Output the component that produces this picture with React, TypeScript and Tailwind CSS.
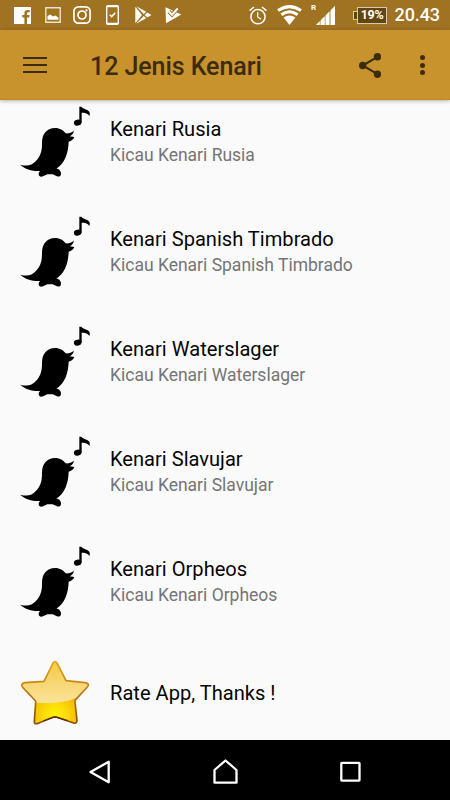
type Track = {
  title: string;
  subtitle: string;
};

const TRACKS: Track[] = [
  { title: 'Kenari Rusia', subtitle: 'Kicau Kenari Rusia' },
  { title: 'Kenari Spanish Timbrado', subtitle: 'Kicau Kenari Spanish Timbrado' },
  { title: 'Kenari Waterslager', subtitle: 'Kicau Kenari Waterslager' },
  { title: 'Kenari Slavujar', subtitle: 'Kicau Kenari Slavujar' },
  { title: 'Kenari Orpheos', subtitle: 'Kicau Kenari Orpheos' },
];

function BirdIcon() {
  return (
    <svg viewBox="30 21 210 210" className="size-[70px] shrink-0 overflow-visible" fill="#000">
      <path d="M31 194C52 200 66 196 77 184C94 166 96 150 96 128C96 101 112 84 135 84C150 84 160 91 167 100C175 101 183 99 192 92C190 101 185 105 179 109L193 111C190 119 184 123 176 125C175 160 164 190 139 206C146 205 153 212 153 221C153 228 147 231 141 229L128 223H112L99 229C92 232 86 229 86 222C86 218 88 215 91 213C67 214 45 208 31 194Z" />
      <ellipse cx="203" cy="68" rx="11.5" ry="9" transform="rotate(-12 203 68)" />
      <path d="M208 20H214C218 27 226 26 233 31C240 36 241 41 238 48C233 39 224 38 215 38V68H208Z" />
    </svg>
  );
}

const STAR_PATH =
  'M129 39Q135 31 141 39L168 92L225 98Q241 101 232 111L197 149Q194 152 195 156L201 212Q200 222 191 219L141 202Q135 200 129 202L81 221Q72 223 73 213L77 157Q77 153 74 150L38 112Q30 101 45 98L102 94Z';

function StarIcon() {
  return (
    <svg viewBox="30 21 210 210" className="size-[70px] shrink-0 overflow-visible">
      <defs>
        <linearGradient id="star-edge" x1="0" y1="0" x2="0" y2="1">
          <stop offset="0" stopColor="#e0a51c" />
          <stop offset="0.5" stopColor="#bd7910" />
          <stop offset="1" stopColor="#8a4a08" />
        </linearGradient>
        <radialGradient id="star-body" cx="0.5" cy="0.8" r="0.4">
          <stop offset="0" stopColor="#fff200" />
          <stop offset="0.4" stopColor="#fcdc08" />
          <stop offset="1" stopColor="#f0ad08" />
        </radialGradient>
        <linearGradient id="star-gloss" x1="0" y1="0" x2="0" y2="1">
          <stop offset="0" stopColor="#f5c83c" />
          <stop offset="0.6" stopColor="#f8d878" />
          <stop offset="1" stopColor="#fae29a" />
        </linearGradient>
        <clipPath id="star-clip">
          <path d={STAR_PATH} />
        </clipPath>
      </defs>
      <g clipPath="url(#star-clip)">
        <rect x="30" y="27" width="210" height="210" fill="url(#star-body)" />
        <path d="M30 27H240V118C205 150 150 164 70 158L30 150Z" fill="url(#star-gloss)" />
      </g>
      <path d={STAR_PATH} fill="none" stroke="url(#star-edge)" strokeWidth="5" strokeLinejoin="round" />
      <path d="M100 213L129 202Q135 200 141 202L172 212" fill="none" stroke="#5a2c05" strokeWidth="4" />
    </svg>
  );
}

function StatusBar() {
  return (
    <div className="flex h-[30px] shrink-0 items-center bg-[#a07322] pr-[10px] pl-[14px] text-white">
      <svg viewBox="0 0 17 17" className="h-[17px] w-[17px]">
        <path fill="#fff" d="M0 0H17V17H13V10.5H15.2L15.6 8H13V6.5Q13 5.3 14.2 5.3H15.7V3H13.5Q10.4 3 10.4 6V8H8.3V10.5H10.4V17H0Z" />
      </svg>
      <svg viewBox="0 0 16 16" className="ml-[14px] h-4 w-4">
        <path fill="none" stroke="#fff" strokeOpacity="0.8" strokeWidth="1.4" d="M.8 .8H15.2V15.2H.8Z" />
        <path fill="#fff" d="M2.5 12.8V9L5.3 7.5L8 9.6L10.5 8.6L13.5 10.7V12.8Z" />
      </svg>
      <svg viewBox="0 0 18 18" className="ml-3 h-[18px] w-[18px]" fill="none" stroke="#fff" strokeWidth="1.7">
        <rect x=".9" y=".9" width="16.2" height="16.2" rx="4.5" />
        <circle cx="9" cy="9" r="4" />
        <circle cx="13.5" cy="4.4" r="1.1" fill="#fff" stroke="none" />
      </svg>
      <svg viewBox="0 0 13 20" className="ml-[15px] h-5 w-[13px]" fill="none" stroke="#fff">
        <rect x=".7" y=".7" width="11.6" height="18.6" rx="1.2" strokeWidth="1.4" />
        <path d="M1 1.500H12M1 18.500H12" strokeWidth="1.6" />
        <path d="M3.7 9.8L5.6 11.6L9.300 7.800" strokeWidth="1.5" />
      </svg>
      <svg viewBox="0 0 17 18" className="ml-4 h-[18px] w-[17px]" fill="#fff">
        <path d="M.3 .8L7 9L.3 17.2Z" />
        <path d="M1.2 .3L11.2 5.8L8.8 8.1ZM1.2 17.7L11.2 12.2L8.8 9.9ZM12.2 6.4L16.5 9L12.2 11.6L9.7 9Z" />
      </svg>
      <svg viewBox="0 0 17 18" className="ml-[13px] h-[18px] w-[17px]">
        <path fill="#fff" d="M.5 1.200L16.300 8.500L1 17.200Z" />
        <path fill="none" stroke="#a07322" strokeWidth="4" d="M3.800 5.500L7 8.700L13.700 1.500" />
        <path fill="none" stroke="#fff" strokeWidth="2" d="M3.800 5.500L7 8.700L12.700 2.500" />
      </svg>

      <svg viewBox="0 0 18 19" className="ml-auto h-[19px] w-[18px]" fill="none" stroke="#fff">
        <circle cx="9" cy="10.7" r="7.1" strokeWidth="1.5" />
        <path d="M.6 4.7L5 1M17.4 4.7L13 1" strokeWidth="1.6" />
        <path d="M8.7 6.2V11L12 13.2" strokeWidth="1.3" />
      </svg>
      <svg viewBox="0 0 25 20" className="ml-[10px] h-5 w-[25px]" fill="none" stroke="#fff" strokeWidth="3">
        <path d="M1 5.6Q12.5 -2.4 24 5.6" />
        <path d="M4.4 9.7Q12.5 3.8 20.6 9.7" />
        <path fill="#fff" stroke="none" d="M6.6 12.6Q12.5 8.3 18.4 12.6L12.5 20Z" />
      </svg>
      <span className="ml-[9px] h-[22px] w-[5px] text-[8px] leading-[7px] font-bold">R</span>
      <svg viewBox="0 0 19 19" className="h-[19px] w-[19px]">
        <path fill="#fff" fillOpacity="0.55" d="M19 0V19H0Z" />
        <path fill="#fff" d="M0 19L3.5 15.5V19ZM5 14L8.5 10.5V19H5ZM10 9L13 6V19H10ZM15 4L19 0V19H15Z" />
      </svg>
      <div className="ml-[18px] flex h-[17px] items-center">
        <div className="h-[9px] w-[4px] border border-r-0 border-[#d8c9ab] bg-[#63450f]" />
        <div className="flex h-[17px] w-[30px] items-center justify-center border border-[#d8c9ab] bg-[#63450f] text-[12.5px] leading-none font-bold tracking-[-0.3px]">
          19%
        </div>
      </div>
      <span className="ml-[7px] w-[46px] text-right text-[18px] leading-none font-medium tracking-[-0.1px] whitespace-nowrap">
        20.43
      </span>
    </div>
  );
}

function AppBar() {
  return (
    <header className="z-10 flex h-[70px] shrink-0 items-center border-b border-[#c28a1c] bg-[#c8922c] pt-px pr-[25px] pl-[23px] text-[#3c2c0d] shadow-[0_1px_4px_rgba(0,0,0,0.3)]">
      <button type="button" aria-label="Menu" className="-mt-px flex w-6 flex-col gap-[5px]">
        <span className="h-[2px] bg-current" />
        <span className="h-[2px] bg-current" />
        <span className="h-[2px] bg-current" />
      </button>
      <h1 className="ml-[43px] pt-[2px] text-[25px] leading-none font-medium tracking-[-0.07px]">12 Jenis Kenari</h1>
      <button type="button" aria-label="Share" className="ml-auto">
        <svg viewBox="0 0 22.4 25" className="h-[25px] w-[22.4px]" fill="currentColor">
          <path d="M18.5 3.8L3.7 12.5L18.5 21.2" fill="none" stroke="currentColor" strokeWidth="2.1" />
          <circle cx="18.5" cy="3.8" r="3.7" />
          <circle cx="3.7" cy="12.5" r="3.7" />
          <circle cx="18.5" cy="21.2" r="3.7" />
        </svg>
      </button>
      <button type="button" aria-label="More options" className="ml-[39px] flex flex-col gap-[2.5px]">
        <span className="size-[5px] rounded-full bg-current" />
        <span className="size-[5px] rounded-full bg-current" />
        <span className="size-[5px] rounded-full bg-current" />
      </button>
    </header>
  );
}

function NavigationBar() {
  return (
    <nav className="flex h-[60px] shrink-0 items-center bg-black pt-[3px] pr-[89px] pl-[89px]">
      <svg viewBox="0 0 22 24" className="h-6 w-[22px]" fill="none" stroke="#fff" strokeWidth="2.3" strokeLinejoin="round">
        <path d="M1.5 12L19.7 1.7V22.3Z" />
      </svg>
      <svg viewBox="0 0 25 26" className="mx-auto h-[26px] w-[25px]" fill="none" stroke="#fff" strokeWidth="2.3" strokeLinejoin="round">
        <path d="M1.5 11L12.5 1.5L23.5 11V23.7H1.5Z" />
      </svg>
      <svg viewBox="0 0 21 21" className="h-[21px] w-[21px]" fill="none" stroke="#fff" strokeWidth="2.3">
        <rect x="1.3" y="1.8" width="18.2" height="17.8" rx=".5" />
      </svg>
    </nav>
  );
}

export default function App() {
  return (
    <div className="flex h-[800px] w-[450px] flex-col overflow-hidden bg-[#fafafa] font-['Roboto',sans-serif]">
      <StatusBar />
      <AppBar />
      <main className="min-h-0 flex-1 overflow-hidden">
        {/* the list is scrolled slightly, so the first row tucks under the bar */}
        <ul className="-mt-[13px]">
          {TRACKS.map((track) => (
            <li key={track.title} className="flex h-[110px] items-center pl-5">
              <BirdIcon />
              <div className="ml-5 flex flex-col gap-0.5">
                <p className="text-[20.1px] leading-6 text-[#050505]">{track.title}</p>
                <p className="text-[17.5px] leading-6 text-[#757575]">{track.subtitle}</p>
              </div>
            </li>
          ))}
          <li className="flex h-[110px] items-center pl-5">
            <StarIcon />
            <p className="ml-5 pt-[2px] text-[20.1px] leading-6 text-[#050505]">Rate App, Thanks !</p>
          </li>
        </ul>
      </main>
      <NavigationBar />
    </div>
  );
}
